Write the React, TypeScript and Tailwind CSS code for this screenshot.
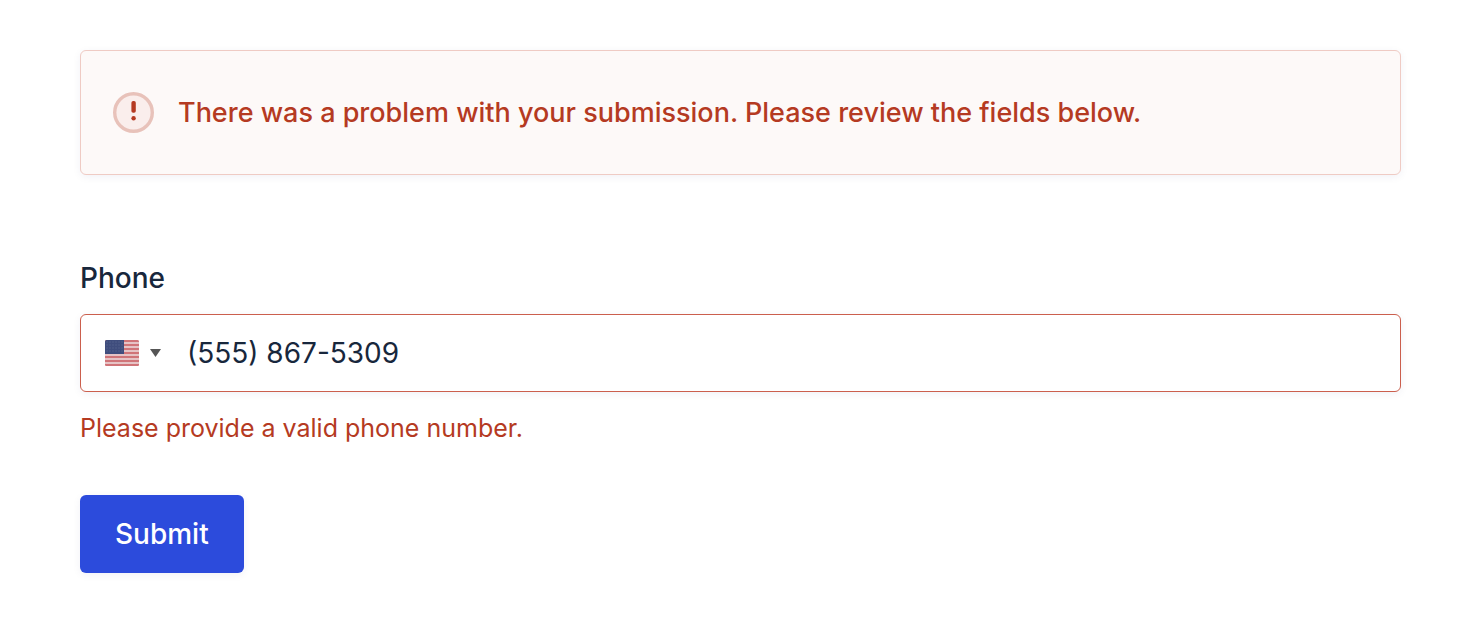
import React, { useState } from 'react';

const AlertIcon = () => (
  <svg className="size-[41px] shrink-0" viewBox="0 0 41 41" fill="none" aria-hidden="true">
    <circle cx="20.5" cy="20.5" r="18.8" fill="#faeeec" stroke="#e8c2ba" strokeWidth="3.4" />
    <rect x="18.4" y="9" width="4.4" height="11.8" rx="1.8" fill="#b53a22" />
    <circle cx="20.6" cy="26.2" r="2.2" fill="#b53a22" />
  </svg>
);

const stripes = [0, 4, 8, 12, 16, 20, 24];

const UsFlag = () => (
  <svg className="h-[26px] w-[34px] shrink-0" viewBox="0 0 34 26" aria-hidden="true">
    <clipPath id="flag-shape">
      <rect width="34" height="26" rx="1.5" />
    </clipPath>
    <g clipPath="url(#flag-shape)">
      <rect width="34" height="26" fill="#e6c3c5" />
      {stripes.map((y) => (
        <rect key={y} y={y} width="34" height="2" fill="#d07478" />
      ))}
      <rect width="19" height="14" fill="#3f4d7d" />
      <g fill="#56648f">
        {[2, 5, 8, 11].map((y) =>
          [2, 5, 8, 11, 14, 17].map((x) => <circle key={`${x}-${y}`} cx={x} cy={y} r="0.7" />)
        )}
      </g>
    </g>
  </svg>
);

const App: React.FC = () => {
  const [country, setCountry] = useState('us');
  const [phone, setPhone] = useState('(555) 867-5309');

  return (
    <main className="min-h-screen bg-white pt-[50px] pr-[73px] pb-10 pl-20 font-['Inter',sans-serif] text-[28px] leading-10">
      <form noValidate onSubmit={(e) => e.preventDefault()}>
        <div
          role="alert"
          className="flex items-center gap-6 rounded-md border border-[#efcbc4] bg-[#fdf9f8] px-8 py-[41px] text-[27px] font-medium text-[#b53a22] shadow-[0_2px_8px_rgba(18,25,97,0.06)]"
        >
          <AlertIcon />
          <p>There was a problem with your submission. Please review the fields below.</p>
        </div>

        <div className="mt-[83px]">
          <label htmlFor="phone" className="block font-medium text-[#18273c]">Phone</label>

          <div className="mt-4 flex h-[78px] items-center rounded-md border border-[#cb5f4d] bg-white pl-6 shadow-[0_2px_8px_rgba(18,25,97,0.06)]">
            <div className="relative flex items-center gap-[11px]">
              <UsFlag />
              <svg className="h-2 w-[11px]" viewBox="0 0 11 8" aria-hidden="true">
                <path d="M0 0h11L5.5 8z" fill="#555555" />
              </svg>
              <select
                aria-label="Country"
                value={country}
                onChange={(e) => setCountry(e.target.value)}
                className="absolute inset-0 w-full cursor-pointer opacity-0"
              >
                <option value="us">US</option>
              </select>
            </div>
            <input
              id="phone"
              type="tel"
              value={phone}
              onChange={(e) => setPhone(e.target.value)}
              aria-invalid="true"
              aria-describedby="phone-error"
              className="ml-[26px] h-full min-w-0 flex-1 bg-transparent text-[#18273c] outline-none"
            />
          </div>

          <p id="phone-error" className="mt-4 text-[25px] text-[#b53a22]">Please provide a valid phone number.</p>
        </div>

        <button
          type="submit"
          className="mt-[47px] h-[78px] rounded-md bg-[#2c4bdc] px-[35px] font-medium text-white shadow-[0_2px_8px_rgba(18,25,97,0.06)]"
        >
          Submit
        </button>
      </form>
    </main>
  );
};

export default App;
